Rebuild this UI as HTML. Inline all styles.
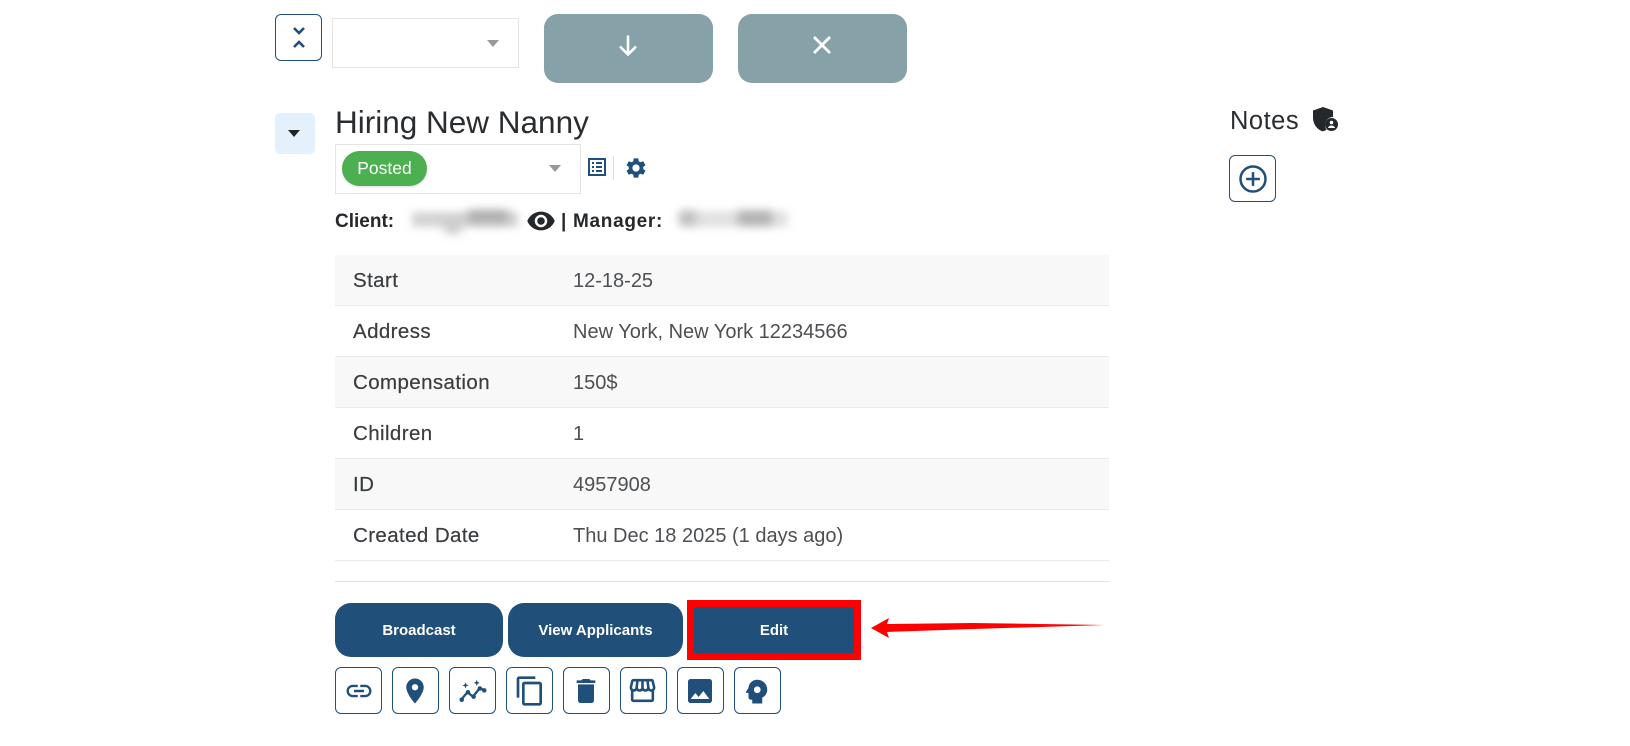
<!DOCTYPE html>
<html><head><meta charset="utf-8">
<style>
html,body{margin:0;padding:0;background:#fff;width:1630px;height:746px;overflow:hidden}
body{position:relative;font-family:"Liberation Sans",sans-serif;color:#212529}
.a{position:absolute;box-sizing:border-box}
.ib{position:absolute;box-sizing:border-box;width:47px;height:47px;border:1px solid #204f79;border-radius:6px;background:#fff;display:flex;align-items:center;justify-content:center}
.ib svg{fill:#204f79;display:block}
.row{position:absolute;left:335px;width:774px;height:51px;border-bottom:1px solid #eaeaea;box-sizing:border-box}
.row.g{background:#f8f8f8}
.row b{position:absolute;left:18px;top:14px;font-weight:400;font-size:20.5px;line-height:23px;letter-spacing:.4px;color:#3a3d40;-webkit-text-stroke:.2px #3a3d40;white-space:nowrap}
.row span{position:absolute;left:238px;top:15px;font-size:20px;line-height:23px;color:#4d5053;white-space:nowrap}
.btn{position:absolute;top:603px;height:54px;background:#204f79;border-radius:16px;color:#fff;font-weight:700;font-size:15px;display:flex;align-items:center;justify-content:center}
.sel{position:absolute;box-sizing:border-box;border:1px solid #e4e4e4;background:#fff}
.tri{position:absolute;width:0;height:0;border-left:6px solid transparent;border-right:6px solid transparent;border-top:7px solid #999}
.grey{position:absolute;top:14px;height:69px;width:169px;background:#86a1a7;border-radius:14px;display:flex;align-items:center;justify-content:center}
.blur{position:absolute;background:#ccc;filter:blur(5px)}
</style></head>
<body>

<div class="ib" style="left:275px;top:14px">
<svg width="24" height="28" viewBox="0 0 24 28"><path d="M7 4l5 5 5-5" fill="none" stroke="#204f79" stroke-width="2.6"/><path d="M7 23l5-5 5 5" fill="none" stroke="#204f79" stroke-width="2.6"/></svg>
</div>
<div class="sel" style="left:332px;top:18px;width:187px;height:50px"><div class="tri" style="left:154px;top:21px"></div></div>
<div class="grey" style="left:544px"><svg style="margin:-7px 0 0 -2px" width="28" height="28" viewBox="0 0 28 28"><path d="M14 4.500v19M6 15.500l8 8 8-8" fill="none" stroke="#fff" stroke-width="2.600"/></svg></div>
<div class="grey" style="left:738px"><svg style="margin:-7px 0 0 -2px" width="28" height="28" viewBox="0 0 28 28"><path d="M6 6l16 16M22 6L6 22" fill="none" stroke="#fff" stroke-width="2.800"/></svg></div>

<div class="a" style="left:275px;top:113px;width:40px;height:41px;background:#e3f1fd;border-radius:5px"><div class="tri" style="left:13px;top:17px;border-top-color:#212529"></div></div>
<div class="a" style="left:335px;top:102px;font-size:31.500px;line-height:40px;white-space:nowrap;color:#2a2d30">Hiring New Nanny</div>

<div class="sel" style="left:335px;top:144px;width:246px;height:50px">
<div class="a" style="left:6px;top:6px;width:85px;height:35px;background:#4caf50;border-radius:18px;color:#fff;font-size:17.500px;line-height:35px;text-align:center;box-shadow:0 1px 2px rgba(0,0,0,.15)">Posted</div>
<div class="tri" style="left:213px;top:20px"></div>
</div>
<svg class="a" style="left:585px;top:155px" width="24" height="24" viewBox="0 0 24 24"><path fill="#204f79" fill-rule="evenodd" d="M3 3h18v18H3zM5 5v14h14V5z"/><path fill="#204f79" d="M7 7h2v2H7zM11 7h6v2h-6zM7 11h2v2H7zM11 11h6v2h-6zM7 15h2v2H7zM11 15h6v2h-6z"/></svg>
<div class="a" style="left:613px;top:156px;width:1px;height:24px;background:#ddd"></div>
<svg class="a" style="left:624px;top:156px" width="24" height="24" viewBox="0 0 24 24"><path fill="#204f79" d="M19.140 12.940c.04-.3.06-.61.06-.94 0-.32-.02-.64-.07-.94l2.030-1.580c.18-.14.23-.41.12-.61l-1.920-3.320c-.12-.22-.37-.29-.59-.22l-2.390.96c-.5-.38-1.030-.7-1.620-.94l-.36-2.540c-.04-.24-.24-.41-.48-.41h-3.840c-.24 0-.43.17-.47.41l-.36 2.540c-.59.24-1.130.57-1.620.94l-2.390-.96c-.22-.08-.47 0-.59.22L2.740 8.870c-.12.21-.08.47.12.61l2.030 1.580c-.05.3-.09.63-.09.94s.02.64.07.94l-2.030 1.580c-.18.14-.23.41-.12.61l1.920 3.320c.12.22.37.29.59.22l2.390-.96c.5.38 1.030.7 1.620.94l.36 2.540c.05.24.24.41.48.41h3.840c.24 0 .44-.17.47-.41l.36-2.540c.59-.24 1.130-.56 1.620-.94l2.390.96c.22.08.47 0 .59-.22l1.920-3.320c.12-.22.07-.47-.12-.61l-2.010-1.580zM12 15.600c-1.980 0-3.600-1.620-3.600-3.600s1.620-3.600 3.600-3.600 3.600 1.620 3.600 3.600-1.620 3.600-3.600 3.600z"/></svg>

<div class="a" style="left:335px;top:210px;font-size:19px;line-height:24px;font-weight:700;white-space:nowrap;color:#25282b">Client:</div>
<div class="blur" style="left:412px;top:212px;width:106px;height:15px;background:#d4d4d4;filter:blur(4px)"></div>
<div class="blur" style="left:445px;top:222px;width:16px;height:11px;background:#c4c4c4"></div>
<div class="blur" style="left:468px;top:211px;width:40px;height:11px;background:#a8a8a8"></div>
<svg class="a" style="left:526px;top:206px" width="30" height="30" viewBox="0 0 24 24"><path fill="#25282b" d="M12 4.500C7 4.500 2.730 7.610 1 12c1.730 4.390 6 7.500 11 7.500s9.270-3.110 11-7.500c-1.730-4.390-6-7.500-11-7.500zM12 17c-2.760 0-5-2.240-5-5s2.240-5 5-5 5 2.240 5 5-2.240 5-5 5zm0-8c-1.660 0-3 1.340-3 3s1.340 3 3 3 3-1.340 3-3-1.340-3-3-3z"/></svg>
<div class="a" style="left:561px;top:210px;font-size:19px;line-height:24px;font-weight:700;white-space:nowrap;color:#25282b;letter-spacing:.7px">| Manager:</div>
<div class="blur" style="left:680px;top:211px;width:108px;height:16px;background:#e2e2e2;filter:blur(4px)"></div>
<div class="blur" style="left:738px;top:212px;width:34px;height:12px;background:#a8a8a8"></div>
<div class="blur" style="left:680px;top:212px;width:16px;height:12px;background:#b8b8b8"></div>

<div class="row g" style="top:255px"><b>Start</b><span>12-18-25</span></div>
<div class="row" style="top:306px"><b>Address</b><span>New York, New York 12234566</span></div>
<div class="row g" style="top:357px"><b>Compensation</b><span>150$</span></div>
<div class="row" style="top:408px"><b>Children</b><span>1</span></div>
<div class="row g" style="top:459px"><b>ID</b><span>4957908</span></div>
<div class="row" style="top:510px"><b>Created Date</b><span>Thu Dec 18 2025 (1 days ago)</span></div>
<div class="a" style="left:335px;top:581px;width:774px;height:1px;background:#e2e2e2"></div>

<div class="btn" style="left:335px;width:168px">Broadcast</div>
<div class="btn" style="left:508px;width:175px">View Applicants</div>
<div class="a" style="left:687px;top:600px;width:174px;height:60px;background:#204f79;border:7px solid #f00;color:#fff;font-weight:700;font-size:15px;display:flex;align-items:center;justify-content:center">Edit</div>

<svg class="a" style="left:865px;top:611px" width="245" height="34" viewBox="0 0 245 34"><path fill="#f00" d="M6 17L24 7l-2 6 86-1 132 2-132 4-86 3 2 6z"/></svg>

<div class="ib" style="left:335px;top:667px"><svg width="30" height="30" viewBox="0 0 24 24"><path d="M3.900 12c0-1.710 1.390-3.100 3.100-3.100h4V7H7c-2.760 0-5 2.240-5 5s2.240 5 5 5h4v-1.900H7c-1.710 0-3.100-1.390-3.100-3.100zM8 13h8v-2H8v2zm9-6h-4v1.900h4c1.710 0 3.100 1.390 3.100 3.100s-1.390 3.100-3.100 3.100h-4V17h4c2.760 0 5-2.240 5-5s-2.240-5-5-5z"/></svg></div>
<div class="ib" style="left:392px;top:667px"><svg style="margin-left:-2px" width="30" height="30" viewBox="0 0 24 24"><path d="M12 2C8.130 2 5 5.130 5 9c0 5.250 7 13 7 13s7-7.750 7-13c0-3.870-3.130-7-7-7zm0 9.500c-1.380 0-2.500-1.120-2.500-2.500s1.120-2.500 2.500-2.500 2.500 1.120 2.500 2.500-1.120 2.500-2.500 2.500z"/></svg></div>
<div class="ib" style="left:449px;top:667px"><svg width="30" height="30" viewBox="0 0 24 24"><path d="M2.500 19l5-6 4.500 3.500 5.500-7 3.500 2" fill="none" stroke="#204f79" stroke-width="1.800"/><circle cx="3" cy="19" r="1.800"/><circle cx="8" cy="13" r="1.800"/><circle cx="12.500" cy="16.500" r="1.800"/><circle cx="17.500" cy="10" r="1.800"/><circle cx="21" cy="11.500" r="1.800"/><path d="M6 5l.7 1.800 1.800.7-1.800.7L6 10l-.7-1.800-1.800-.7 1.800-.7zM15 3l.7 1.800 1.800.7-1.800.7L15 8l-.7-1.800-1.800-.7 1.800-.7z"/></svg></div>
<div class="ib" style="left:506px;top:667px"><svg width="32" height="32" viewBox="0 0 24 24"><path d="M16 1H4c-1.100 0-2 .9-2 2v14h2V3h12V1zm3 4H8c-1.100 0-2 .9-2 2v14c0 1.100.9 2 2 2h11c1.100 0 2-.9 2-2V7c0-1.100-.9-2-2-2zm0 16H8V7h11v14z"/></svg></div>
<div class="ib" style="left:563px;top:667px"><svg style="margin-left:-2px" width="32" height="32" viewBox="0 0 24 24"><path d="M6 19c0 1.100.9 2 2 2h8c1.100 0 2-.9 2-2V7H6v12zM19 4h-3.500l-1-1h-5l-1 1H5v2h14V4z"/></svg></div>
<div class="ib" style="left:620px;top:667px"><svg style="margin-left:-2px" width="31" height="31" viewBox="0 0 24 24"><path fill-rule="evenodd" d="M21.900 8.900l-1.050-4.370c-.22-.9-1-1.530-1.920-1.530H5.070c-.91 0-1.710.64-1.920 1.530L2.100 8.900c-.24 1.020-.02 2.060.62 2.880.08.11.19.190.28.290V19c0 1.100.9 2 2 2h14c1.100 0 2-.9 2-2v-6.930c.09-.09.2-.18.28-.28.64-.82.870-1.870.62-2.890zM18.910 4.990l1.050 4.370c.1.420.01.840-.25 1.170-.14.180-.44.470-.94.470-.61 0-1.140-.49-1.210-1.140L16.980 5l1.930-.01zM13 5h1.960l.54 4.520c.05.390-.07.780-.33 1.070-.22.26-.54.410-.95.410-.67 0-1.220-.59-1.220-1.310V5zM8.490 9.520L9.040 5H11v4.690c0 .72-.55 1.310-1.290 1.310-.34 0-.65-.15-.89-.41-.25-.29-.37-.68-.33-1.070zM4.040 9.360L5.050 5h1.970l-.58 4.820c-.08.650-.6 1.140-1.210 1.140-.49 0-.8-.29-.93-.47-.27-.32-.36-.75-.26-1.130zM5 19v-6.030c.08.01.15.030.23.030.87 0 1.660-.36 2.240-.95.600.6 1.400.95 2.310.95.870 0 1.650-.36 2.230-.93.590.57 1.390.93 2.290.93.840 0 1.640-.35 2.240-.95.580.59 1.370.95 2.240.95.08 0 .15-.02.23-.03V19H5z"/></svg></div>
<div class="ib" style="left:677px;top:667px"><svg style="margin-left:-2px" width="32" height="32" viewBox="0 0 24 24"><path d="M21 19V5c0-1.100-.9-2-2-2H5c-1.100 0-2 .9-2 2v14c0 1.100.9 2 2 2h14c1.100 0 2-.9 2-2zM8.500 13.500l2.500 3.010L14.500 12l4.500 6H5l3.500-4.500z"/></svg></div>
<div class="ib" style="left:734px;top:667px"><svg style="margin-left:-3px" width="30" height="30" viewBox="0 0 24 24"><path fill-rule="evenodd" d="M13 3C9.200 3 6.200 5.800 6 9.500L4 12.700c-.2.300 0 .8.500.8H6V17c0 1.100.9 2 2 2h1v3h8v-4.700c2.400-1.100 4-3.500 4-6.300 0-4.500-3.500-8-8-8zm0 5.300a2.700 2.700 0 1 0 0 5.400 2.700 2.700 0 0 0 0-5.400z"/></svg></div>

<div class="a" style="left:1230px;top:105px;font-size:25.500px;line-height:32px;color:#2a2d30;letter-spacing:.5px">Notes</div>
<svg class="a" style="left:1311px;top:105px" width="28" height="27" viewBox="0 0 28 27"><path fill="#25282b" d="M12 2l10 3.500V12c-4.500 0-8 3.500-8 8 0 1.900.6 3.500 1.600 4.800-1.100.7-2.300 1.200-3.600 1.600C6 24.800 2 19 2 12.500V5.500z"/><circle cx="20.500" cy="19.500" r="6.500" fill="#25282b"/><circle cx="20.500" cy="17.500" r="1.800" fill="#fff"/><path fill="#fff" d="M17 23c.3-1.700 2-2.500 3.500-2.500S23.700 21.300 24 23z"/></svg>
<div class="ib" style="left:1229px;top:155px"><svg width="30" height="30" viewBox="0 0 24 24"><circle cx="12" cy="12" r="10" fill="none" stroke="#204f79" stroke-width="2"/><path d="M12 6.500v11M6.500 12h11" stroke="#204f79" stroke-width="2" fill="none"/></svg></div>

</body></html>
